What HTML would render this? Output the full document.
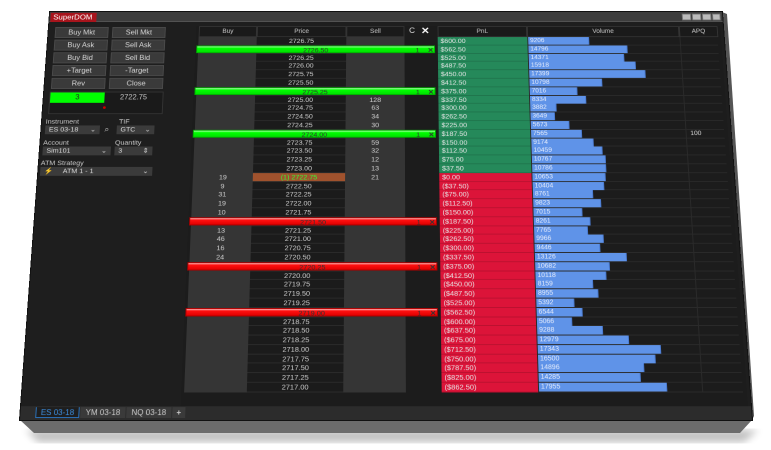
<!DOCTYPE html>
<html><head><meta charset="utf-8"><style>
*{margin:0;padding:0;box-sizing:border-box}
body{width:771px;height:450px;background:#fff;overflow:hidden;position:relative;font-family:"Liberation Sans",sans-serif}
#slab{position:absolute;left:0;top:0}
#w{position:absolute;left:20px;top:-30px;width:732px;height:450px;background:#1e1e1e;transform-origin:50% 100%;transform:perspective(788px) rotateX(9deg);box-shadow:0 0 0 1px #111;overflow:hidden;color:#ddd;font-size:8px}
#tb{position:absolute;left:0;top:0;width:732px;height:12px;background:#3d3d3d;border-bottom:1px solid #555}
#tt{position:absolute;left:1px;top:1px;height:11px;width:50px;background:#a8141c;color:#fff;font-size:8.5px;line-height:11px;padding-left:3px}
.wb{position:absolute;top:2px;width:10px;height:8px;background:#bbb;border:1px solid #777}
.btn{position:absolute;height:13px;width:58px;background:#3a3a3a;border:1px solid #4a4a4a;color:#d8d8d8;font-size:8px;text-align:center;line-height:11px}
.lbl{position:absolute;font-size:7.5px;color:#ccc}
.dd{position:absolute;height:10px;background:#3b3b3b;color:#ddd;font-size:7.5px;line-height:10px;padding-left:4px}
.dd span{position:absolute;right:4px;top:0}
#grid{position:absolute;left:160px;top:17px;width:569px;height:419px;background:#1c1c1c}
.h{position:absolute;top:17px;height:13px;background:#1a1a1a;border:1px solid #333;color:#ccc;font-size:7px;text-align:center;line-height:11px}
#rows{position:absolute;left:163px;top:30px;width:565px}
.r{display:flex;height:9.8px;line-height:9.8px;font-size:7.5px;text-align:center}
.r i{font-style:normal;display:block;height:9.8px}
.b{width:63px;background:#353535;color:#d0d0d0}
.p{width:97px;background:#1b1b1b;border-bottom:1px solid #2b2b2b;color:#d0d0d0}
.s{width:63px;background:#353535;color:#d0d0d0}
.g{width:36px}
.pn{width:97px;text-align:left!important;padding-left:3px;color:#e6e6e6;border-bottom:1px solid rgba(0,0,0,.15)}
.up{background:#25895a}.dn{background:#dc1439}
.v{width:165px;border-bottom:1px solid #2a2a2a;border-left:1px solid #2a2a2a;text-align:left}
.v b{display:block;height:9px;background:#5f93e8;color:#e8eefc;font-weight:normal;padding-left:2px;line-height:9px;font-size:7px;border-right:1px solid #4a7ad0}
.a{width:41px;border-bottom:1px solid #2a2a2a;border-left:1px solid #2a2a2a;text-align:left!important;padding-left:4px;font-size:7px}
.bar{position:absolute;left:161px;width:258px;height:9px;color:#333;font-size:7.5px;line-height:9px;text-align:center}
.gb{background:linear-gradient(#b6ffb6 0,#00ff00 30%,#00e000 100%);border:1px solid #0a0}
.rb{background:linear-gradient(#ffb8b8 0,#ff1010 30%,#e00000 100%);border:1px solid #a00}
.bar .q{position:absolute;left:236px;top:0}
.bar .x{position:absolute;left:249px;top:0;font-weight:bold}
.tab{position:absolute;top:437px;height:11px;background:#3a3a3a;color:#ccc;font-size:8px;line-height:11px;text-align:center}
</style></head><body>
<svg id="slab" width="771" height="450"><defs><filter id="f"><feGaussianBlur stdDeviation="4"/></filter></defs>
<polygon points="26,430 758,430 744,442 38,442" fill="#000" opacity=".25" filter="url(#f)"/>
<polygon points="20,420 752,420 740,433 34,433" fill="#6c6c6c"/>
<polygon points="722,12 752,420 754,416 727,14" fill="#555"/>
</svg>
<div id="w">
<div id="tb"><div id="tt">SuperDOM</div><div class="wb" style="left:688px"></div><div class="wb" style="left:699px"></div><div class="wb" style="left:710px"></div><div class="wb" style="left:721px;width:9px"></div></div>
<div class="btn" style="left:7px;top:18px">Buy Mkt</div><div class="btn" style="left:69px;top:18px">Sell Mkt</div>
<div class="btn" style="left:7px;top:33px">Buy Ask</div><div class="btn" style="left:69px;top:33px">Sell Ask</div>
<div class="btn" style="left:7px;top:48px">Buy Bid</div><div class="btn" style="left:69px;top:48px">Sell Bid</div>
<div class="btn" style="left:7px;top:63px">+Target</div><div class="btn" style="left:69px;top:63px">-Target</div>
<div class="btn" style="left:7px;top:78px">Rev</div><div class="btn" style="left:69px;top:78px">Close</div>
<div style="position:absolute;left:6px;top:94px;width:122px;height:26px;background:#1a1a1a;border:1px solid #333"></div>
<div style="position:absolute;left:7px;top:95px;width:58px;height:12px;background:#0f0;color:#222;font-size:8px;text-align:center;line-height:12px">3</div>
<div style="position:absolute;left:66px;top:95px;width:60px;height:12px;color:#ccc;font-size:8px;text-align:center;line-height:12px">2722.75</div>
<div style="position:absolute;left:64px;top:111px;width:3px;height:3px;border-radius:50%;background:#c00"></div>
<div class="lbl" style="left:4px;top:124px">Instrument</div><div class="lbl" style="left:82px;top:124px">TIF</div>
<div class="dd" style="left:4px;top:133px;width:58px">ES 03-18<span>⌄</span></div>
<div class="lbl" style="left:67px;top:132px;font-size:9px">⌕</div>
<div class="dd" style="left:80px;top:133px;width:40px">GTC<span>⌄</span></div>
<div class="lbl" style="left:3px;top:148px">Account</div><div class="lbl" style="left:79px;top:148px">Quantity</div>
<div class="dd" style="left:3px;top:157px;width:72px">Sim101<span>⌄</span></div>
<div class="dd" style="left:79px;top:157px;width:40px">3<span>⇕</span></div>
<div class="lbl" style="left:2px;top:171px">ATM Strategy</div>
<div class="dd" style="left:2px;top:180px;width:118px">⚡&nbsp;&nbsp;&nbsp;&nbsp;&nbsp;ATM 1 - 1<span>⌄</span></div>
<div id="grid"></div>
<div class="h" style="left:163px;width:63px">Buy</div><div class="h" style="left:226px;width:97px">Price</div><div class="h" style="left:323px;width:63px">Sell</div>
<div style="position:absolute;left:391px;top:17px;font-size:9px;color:#ddd">C</div><div style="position:absolute;left:404px;top:16px;font-size:11px;color:#fff;font-weight:bold">✕</div>
<div class="h" style="left:422px;width:97px">PnL</div><div class="h" style="left:519px;width:165px">Volume</div><div class="h" style="left:684px;width:42px">APQ</div>
<div id="rows">
<div class="r"><i class="b"></i><i class="p">2726.75</i><i class="s"></i><i class="g"></i><i class="pn up">$600.00</i><i class="v"><b style="width:66px">9206</b></i><i class="a"></i></div>
<div class="r"><i class="b"></i><i class="p">2726.50</i><i class="s"></i><i class="g"></i><i class="pn up">$562.50</i><i class="v"><b style="width:107px">14796</b></i><i class="a"></i></div>
<div class="r"><i class="b"></i><i class="p">2726.25</i><i class="s"></i><i class="g"></i><i class="pn up">$525.00</i><i class="v"><b style="width:103px">14371</b></i><i class="a"></i></div>
<div class="r"><i class="b"></i><i class="p">2726.00</i><i class="s"></i><i class="g"></i><i class="pn up">$487.50</i><i class="v"><b style="width:115px">15918</b></i><i class="a"></i></div>
<div class="r"><i class="b"></i><i class="p">2725.75</i><i class="s"></i><i class="g"></i><i class="pn up">$450.00</i><i class="v"><b style="width:125px">17399</b></i><i class="a"></i></div>
<div class="r"><i class="b"></i><i class="p">2725.50</i><i class="s"></i><i class="g"></i><i class="pn up">$412.50</i><i class="v"><b style="width:78px">10798</b></i><i class="a"></i></div>
<div class="r"><i class="b"></i><i class="p">2725.25</i><i class="s"></i><i class="g"></i><i class="pn up">$375.00</i><i class="v"><b style="width:51px">7016</b></i><i class="a"></i></div>
<div class="r"><i class="b"></i><i class="p">2725.00</i><i class="s">128</i><i class="g"></i><i class="pn up">$337.50</i><i class="v"><b style="width:60px">8334</b></i><i class="a"></i></div>
<div class="r"><i class="b"></i><i class="p">2724.75</i><i class="s">63</i><i class="g"></i><i class="pn up">$300.00</i><i class="v"><b style="width:28px">3882</b></i><i class="a"></i></div>
<div class="r"><i class="b"></i><i class="p">2724.50</i><i class="s">34</i><i class="g"></i><i class="pn up">$262.50</i><i class="v"><b style="width:26px">3649</b></i><i class="a"></i></div>
<div class="r"><i class="b"></i><i class="p">2724.25</i><i class="s">30</i><i class="g"></i><i class="pn up">$225.00</i><i class="v"><b style="width:41px">5673</b></i><i class="a"></i></div>
<div class="r"><i class="b"></i><i class="p">2724.00</i><i class="s">102</i><i class="g"></i><i class="pn up">$187.50</i><i class="v"><b style="width:54px">7565</b></i><i class="a">100</i></div>
<div class="r"><i class="b"></i><i class="p">2723.75</i><i class="s">59</i><i class="g"></i><i class="pn up">$150.00</i><i class="v"><b style="width:66px">9174</b></i><i class="a"></i></div>
<div class="r"><i class="b"></i><i class="p">2723.50</i><i class="s">32</i><i class="g"></i><i class="pn up">$112.50</i><i class="v"><b style="width:75px">10459</b></i><i class="a"></i></div>
<div class="r"><i class="b"></i><i class="p">2723.25</i><i class="s">12</i><i class="g"></i><i class="pn up">$75.00</i><i class="v"><b style="width:78px">10767</b></i><i class="a"></i></div>
<div class="r"><i class="b"></i><i class="p">2723.00</i><i class="s">13</i><i class="g"></i><i class="pn up">$37.50</i><i class="v"><b style="width:78px">10786</b></i><i class="a"></i></div>
<div class="r"><i class="b">19</i><i class="p" style="background:#a0522d;color:#3f3">(1) 2722.75</i><i class="s">21</i><i class="g"></i><i class="pn dn">$0.00</i><i class="v"><b style="width:77px">10653</b></i><i class="a"></i></div>
<div class="r"><i class="b">9</i><i class="p">2722.50</i><i class="s"></i><i class="g"></i><i class="pn dn">($37.50)</i><i class="v"><b style="width:75px">10404</b></i><i class="a"></i></div>
<div class="r"><i class="b">31</i><i class="p">2722.25</i><i class="s"></i><i class="g"></i><i class="pn dn">($75.00)</i><i class="v"><b style="width:63px">8761</b></i><i class="a"></i></div>
<div class="r"><i class="b">19</i><i class="p">2722.00</i><i class="s"></i><i class="g"></i><i class="pn dn">($112.50)</i><i class="v"><b style="width:71px">9823</b></i><i class="a"></i></div>
<div class="r"><i class="b">10</i><i class="p">2721.75</i><i class="s"></i><i class="g"></i><i class="pn dn">($150.00)</i><i class="v"><b style="width:51px">7015</b></i><i class="a"></i></div>
<div class="r"><i class="b">24</i><i class="p">2721.50</i><i class="s"></i><i class="g"></i><i class="pn dn">($187.50)</i><i class="v"><b style="width:59px">8261</b></i><i class="a"></i></div>
<div class="r"><i class="b">13</i><i class="p">2721.25</i><i class="s"></i><i class="g"></i><i class="pn dn">($225.00)</i><i class="v"><b style="width:56px">7765</b></i><i class="a"></i></div>
<div class="r"><i class="b">46</i><i class="p">2721.00</i><i class="s"></i><i class="g"></i><i class="pn dn">($262.50)</i><i class="v"><b style="width:72px">9966</b></i><i class="a"></i></div>
<div class="r"><i class="b">16</i><i class="p">2720.75</i><i class="s"></i><i class="g"></i><i class="pn dn">($300.00)</i><i class="v"><b style="width:68px">9446</b></i><i class="a"></i></div>
<div class="r"><i class="b">24</i><i class="p">2720.50</i><i class="s"></i><i class="g"></i><i class="pn dn">($337.50)</i><i class="v"><b style="width:95px">13126</b></i><i class="a"></i></div>
<div class="r"><i class="b"></i><i class="p">2720.25</i><i class="s"></i><i class="g"></i><i class="pn dn">($375.00)</i><i class="v"><b style="width:77px">10682</b></i><i class="a"></i></div>
<div class="r"><i class="b"></i><i class="p">2720.00</i><i class="s"></i><i class="g"></i><i class="pn dn">($412.50)</i><i class="v"><b style="width:73px">10118</b></i><i class="a"></i></div>
<div class="r"><i class="b"></i><i class="p">2719.75</i><i class="s"></i><i class="g"></i><i class="pn dn">($450.00)</i><i class="v"><b style="width:59px">8159</b></i><i class="a"></i></div>
<div class="r"><i class="b"></i><i class="p">2719.50</i><i class="s"></i><i class="g"></i><i class="pn dn">($487.50)</i><i class="v"><b style="width:64px">8955</b></i><i class="a"></i></div>
<div class="r"><i class="b"></i><i class="p">2719.25</i><i class="s"></i><i class="g"></i><i class="pn dn">($525.00)</i><i class="v"><b style="width:39px">5392</b></i><i class="a"></i></div>
<div class="r"><i class="b"></i><i class="p">2719.00</i><i class="s"></i><i class="g"></i><i class="pn dn">($562.50)</i><i class="v"><b style="width:47px">6544</b></i><i class="a"></i></div>
<div class="r"><i class="b"></i><i class="p">2718.75</i><i class="s"></i><i class="g"></i><i class="pn dn">($600.00)</i><i class="v"><b style="width:36px">5066</b></i><i class="a"></i></div>
<div class="r"><i class="b"></i><i class="p">2718.50</i><i class="s"></i><i class="g"></i><i class="pn dn">($637.50)</i><i class="v"><b style="width:67px">9288</b></i><i class="a"></i></div>
<div class="r"><i class="b"></i><i class="p">2718.25</i><i class="s"></i><i class="g"></i><i class="pn dn">($675.00)</i><i class="v"><b style="width:93px">12979</b></i><i class="a"></i></div>
<div class="r"><i class="b"></i><i class="p">2718.00</i><i class="s"></i><i class="g"></i><i class="pn dn">($712.50)</i><i class="v"><b style="width:125px">17343</b></i><i class="a"></i></div>
<div class="r"><i class="b"></i><i class="p">2717.75</i><i class="s"></i><i class="g"></i><i class="pn dn">($750.00)</i><i class="v"><b style="width:119px">16500</b></i><i class="a"></i></div>
<div class="r"><i class="b"></i><i class="p">2717.50</i><i class="s"></i><i class="g"></i><i class="pn dn">($787.50)</i><i class="v"><b style="width:107px">14896</b></i><i class="a"></i></div>
<div class="r"><i class="b"></i><i class="p">2717.25</i><i class="s"></i><i class="g"></i><i class="pn dn">($825.00)</i><i class="v"><b style="width:103px">14285</b></i><i class="a"></i></div>
<div class="r"><i class="b"></i><i class="p">2717.00</i><i class="s"></i><i class="g"></i><i class="pn dn">($862.50)</i><i class="v"><b style="width:129px">17955</b></i><i class="a"></i></div>
</div>
<div class="bar gb" style="top:39.8px">2726.50<span class="q">1</span><span class="x">✕</span></div>
<div class="bar gb" style="top:88.8px">2725.25<span class="q">1</span><span class="x">✕</span></div>
<div class="bar gb" style="top:137.8px">2724.00<span class="q">1</span><span class="x">✕</span></div>
<div class="bar rb" style="top:235.8px">2721.50<span class="q">1</span><span class="x">✕</span></div>
<div class="bar rb" style="top:284.8px">2720.25<span class="q">1</span><span class="x">✕</span></div>
<div class="bar rb" style="top:333.8px">2719.00<span class="q">1</span><span class="x">✕</span></div>
<div style="position:absolute;left:0;top:436px;width:732px;height:14px;background:#2c2c2c"></div>
<div class="tab" style="left:15px;width:44px;background:#1e1e1e;border:1px solid #2a6fb5;border-top:none;color:#3d8fe0">ES 03-18</div>
<div class="tab" style="left:60px;width:45px">YM 03-18</div>
<div class="tab" style="left:106px;width:45px">NQ 03-18</div>
<div class="tab" style="left:152px;width:13px;font-weight:bold">+</div>
</div>
</body></html>
